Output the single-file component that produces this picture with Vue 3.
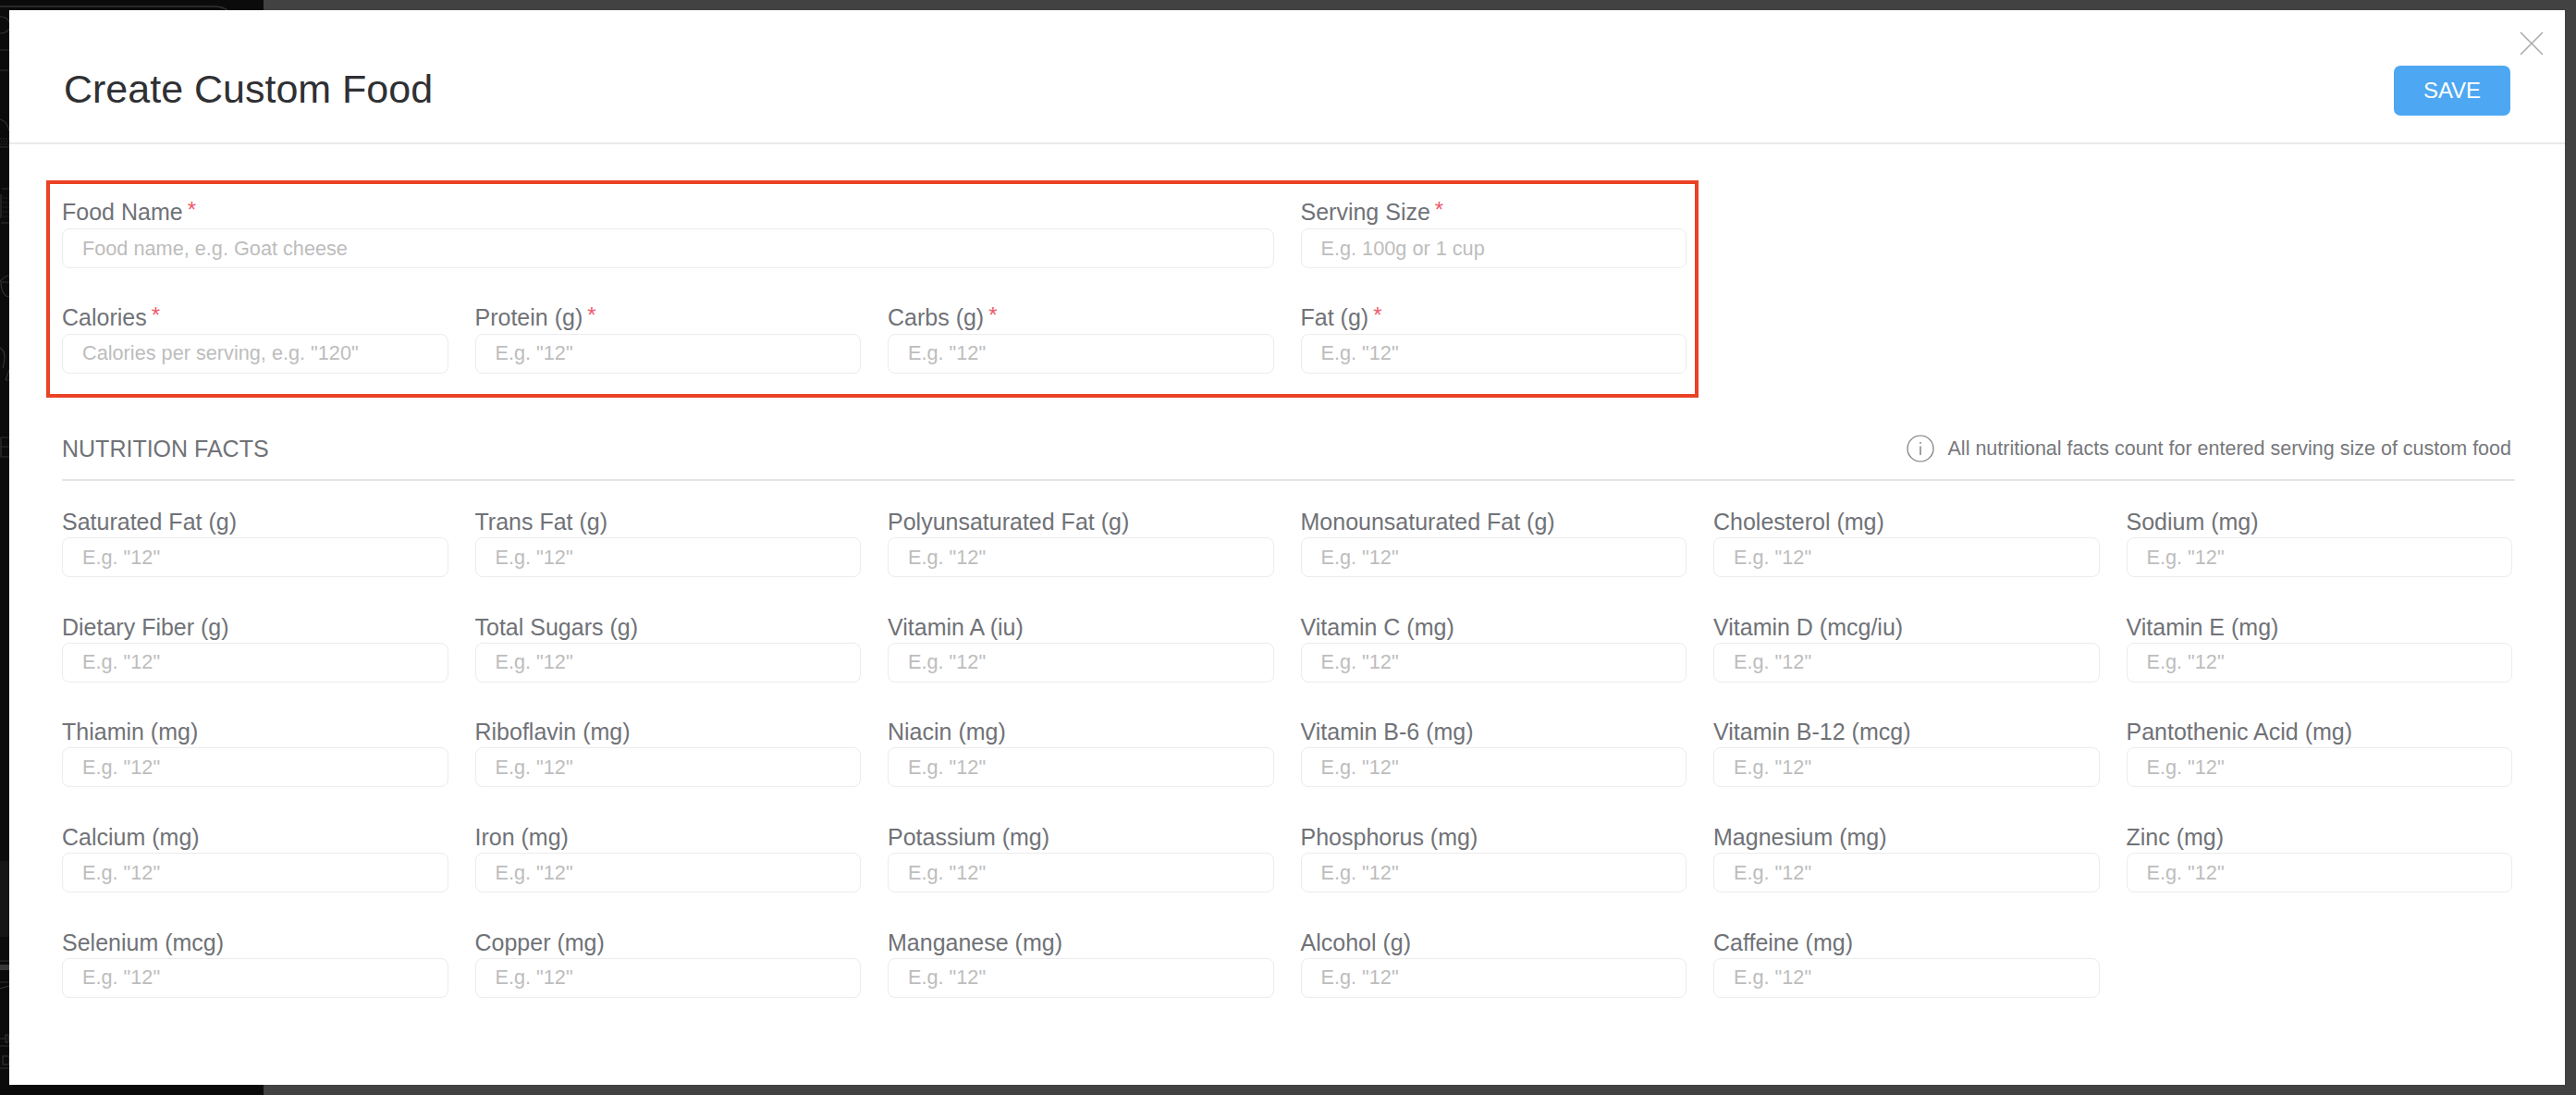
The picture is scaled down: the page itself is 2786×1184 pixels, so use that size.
<script setup>
const topFields = [
  { label: 'Food Name', placeholder: 'Food name, e.g. Goat cheese', wide: true },
  { label: 'Serving Size', placeholder: 'E.g. 100g or 1 cup' },
  { label: 'Calories', placeholder: 'Calories per serving, e.g. "120"' },
  { label: 'Protein (g)', placeholder: 'E.g. "12"' },
  { label: 'Carbs (g)', placeholder: 'E.g. "12"' },
  { label: 'Fat (g)', placeholder: 'E.g. "12"' },
]
const nutrients = [
  'Saturated Fat (g)', 'Trans Fat (g)', 'Polyunsaturated Fat (g)', 'Monounsaturated Fat (g)', 'Cholesterol (mg)', 'Sodium (mg)',
  'Dietary Fiber (g)', 'Total Sugars (g)', 'Vitamin A (iu)', 'Vitamin C (mg)', 'Vitamin D (mcg/iu)', 'Vitamin E (mg)',
  'Thiamin (mg)', 'Riboflavin (mg)', 'Niacin (mg)', 'Vitamin B-6 (mg)', 'Vitamin B-12 (mcg)', 'Pantothenic Acid (mg)',
  'Calcium (mg)', 'Iron (mg)', 'Potassium (mg)', 'Phosphorus (mg)', 'Magnesium (mg)', 'Zinc (mg)',
  'Selenium (mcg)', 'Copper (mg)', 'Manganese (mg)', 'Alcohol (g)', 'Caffeine (mg)',
]
</script>

<template>
  <div class="page">
    <div class="backdrop-dark">
      <svg class="doodles" viewBox="0 0 285 1184" width="285" height="1184" fill="none" stroke="#333" stroke-width="1.2">
        <path d="M0 7 H232 Q240 7 246 11" stroke-width="1.5" />
        <path d="M0 18 Q8 18 10 24 M0 36 Q7 36 10 31" />
        <path d="M0 54 H10 M0 76 H10" />
        <path d="M0 129 Q8 131 10 142 M0 159 H10" />
        <path d="M0 150 H10 M1 153 H10 M0 156 H10" stroke-dasharray="1.5 1.5" />
        <path d="M2 204 H10 M1 241 H10 M1 210 V236" />
        <path d="M3 214 H10 M3 219 H10 M3 224 H10 M3 229 H10 M3 234 H10" stroke-dasharray="1.5 1.5" />
        <path d="M0 304 Q6 298 10 298 M1 306 Q2 320 10 321 M0 305 H10" />
        <path d="M0 376 Q8 380 3 398 M6 411 L10 400 M6 411 H10" />
        <path d="M1 473 H10 M1 483 H10 M1 494 H10 M1 473 V494" />
        <rect x="0" y="931" width="10" height="82" fill="#161616" stroke="none" />
        <path d="M0 1039 H10 M0 1062 H10 M0 1069 L10 1066" />
        <rect x="0" y="1043" width="10" height="6" fill="#383838" stroke="none" />
        <path d="M0 1123 H6 M0 1131 H10 M0 1155 H10" />
        <rect x="6" y="1119" width="3" height="8" />
        <rect x="3" y="1142" width="7" height="9" />
      </svg>
    </div>
    <div class="modal">
      <header class="head">
        <h1>Create Custom Food</h1>
        <button class="save">SAVE</button>
        <svg class="close" viewBox="0 0 26 26" width="26" height="26">
          <path d="M1 1 L25 25 M25 1 L1 25" stroke="#ababab" stroke-width="1.6" fill="none" />
        </svg>
      </header>
      <main class="body">
        <section class="required">
          <div v-for="f in topFields" :key="f.label" class="field" :class="{ wide: f.wide }">
            <label>{{ f.label }}<span class="star">*</span></label>
            <input :placeholder="f.placeholder" />
          </div>
        </section>
        <div class="section-head">
          <h2>NUTRITION FACTS</h2>
          <div class="note">
            <svg viewBox="0 0 30 30" width="30" height="30">
              <circle cx="15" cy="15" r="14" stroke="#77787c" stroke-width="1.2" fill="none" />
              <path d="M15 12.5 V22 M15 8 V9.8" stroke="#77787c" stroke-width="1.4" fill="none" />
            </svg>
            <span>All nutritional facts count for entered serving size of custom food</span>
          </div>
        </div>
        <section class="grid">
          <div v-for="n in nutrients" :key="n" class="field">
            <label>{{ n }}</label>
            <input placeholder='E.g. "12"' />
          </div>
        </section>
      </main>
    </div>
  </div>
</template>

<style>
html, body { margin: 0; background: #424242; }
</style>

<style scoped>
.page {
  width: 2786px;
  height: 1184px;
  box-sizing: border-box;
  padding: 11px 12px 11px 10px;
  background: #424242;
  position: relative;
  overflow: hidden;
  font-family: "Liberation Sans", Arial, sans-serif;
}
.backdrop-dark {
  position: absolute;
  left: 0;
  top: 0;
  bottom: 0;
  width: 285px;
  background: #0b0b0b;
}
.doodles {
  display: block;
}
.modal {
  position: relative;
  height: 1162px;
  background: #fff;
}
.head {
  height: 145px;
  box-sizing: border-box;
  border-bottom: 2px solid #e9e9e9;
  display: flex;
  align-items: center;
  justify-content: space-between;
  padding: 29px 59px 0 59px;
}
h1 {
  margin: 0 0 2px;
  font-size: 43px;
  font-weight: 400;
  color: #2f3033;
}
.save {
  width: 126px;
  height: 54px;
  margin-top: 2px;
  border: 0;
  border-radius: 7px;
  background: #4da7f2;
  color: #fff;
  font: 400 24px "Liberation Sans", Arial, sans-serif;
  padding: 0;
}
.close {
  position: absolute;
  right: 23px;
  top: 23px;
}
.body {
  padding: 39px 57px 0 57px;
}
.required {
  display: grid;
  grid-template-columns: repeat(4, 417.5px);
  column-gap: 29px;
  align-content: start;
  width: 1787px;
  height: 235px;
  box-sizing: border-box;
  margin-left: -17px;
  padding: 7px 0 0 13px;
  border: 4px solid #ea4224;
}
.field {
  height: 113.7px;
  display: flex;
  flex-direction: column;
}
.wide {
  grid-column: span 3;
}
label {
  font-size: 25px;
  line-height: 30px;
  height: 30px;
  padding-top: 9px;
  color: #707277;
  white-space: nowrap;
}
.required label {
  padding-top: 6px;
  padding-bottom: 3px;
}
.star {
  color: #ef5a6a;
  font-size: 24px;
  margin-left: 5px;
  vertical-align: 3px;
}
input {
  display: block;
  width: 100%;
  height: 43px;
  box-sizing: border-box;
  border: 1.5px solid #ececec;
  border-radius: 8px;
  padding: 0 21px;
  margin-top: 2px;
  font: 400 21.7px "Liberation Sans", Arial, sans-serif;
  background: #fff;
  outline: none;
}
input::placeholder {
  color: #bdbdbd;
  opacity: 1;
}
.section-head {
  display: flex;
  align-items: center;
  justify-content: space-between;
  width: 2653px;
  height: 90px;
  box-sizing: border-box;
  padding-top: 22px;
  border-bottom: 2px solid #e4e4e6;
}
h2 {
  margin: 0;
  font-size: 25px;
  font-weight: 400;
  color: #707277;
}
.note {
  display: flex;
  align-items: center;
  gap: 15px;
  font-size: 21.5px;
  color: #77787c;
  padding-right: 4px;
}
.grid {
  display: grid;
  grid-template-columns: repeat(6, 417.5px);
  column-gap: 29px;
  padding-top: 20px;
}
</style>
